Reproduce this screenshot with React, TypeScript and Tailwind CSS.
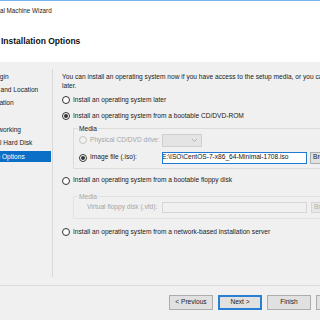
import React from "react";

function Radio({ checked = false, disabled = false }: { checked?: boolean; disabled?: boolean }) {
  return (
    <span
      className={
        "flex h-[8px] w-[8px] shrink-0 items-center justify-center rounded-full border " +
        (disabled ? "border-[#c6c6c6] bg-[#f0f0f0]" : "border-[#333333] bg-white")
      }
    >
      {checked ? <span className="h-[4px] w-[4px] rounded-full bg-[#333333]" /> : null}
    </span>
  );
}

function Btn({ label, primary = false }: { label: string; primary?: boolean }) {
  return (
    <div
      className={
        "flex h-[15px] w-[44px] shrink-0 items-center justify-center border bg-[#e1e1e1] text-[#1a1a1a] " +
        (primary ? "border-[#2a7fd4] shadow-[inset_0_0_0_1px_#2a7fd4]" : "border-[#adadad]")
      }
    >
      {label}
    </div>
  );
}

export default function App() {
  const nav = [
    { t: "Before You Begin", cls: "ml-[-42.4px]" },
    { t: "Specify Name and Location", cls: "ml-[-42.4px]" },
    { t: "Specify Generation", cls: "ml-[-42.4px]" },
    { t: "Assign Memory", cls: "ml-[-46px]" },
    { t: "Configure Networking", cls: "ml-[-42.4px]" },
    { t: "Connect Virtual Hard Disk", cls: "ml-[-43.5px]" },
    { t: "Installation Options", cls: "ml-[-31.4px]", sel: true },
    { t: "Summary", cls: "ml-[-42.4px]" },
  ];
  return (
    <div className="relative flex h-[320px] w-[320px] flex-col overflow-hidden bg-[#f0f0f0] font-['Liberation_Sans',Arial,sans-serif] text-[6.6px] leading-[8.5px] text-[#1a1a1a]">
      <div className="h-px shrink-0 bg-[#78b6e9]" />
      <div className="flex h-[61px] shrink-0 flex-col bg-white">
        <div className="flex h-[19px] items-center whitespace-nowrap pt-[1px] text-[6.3px]">
          <span className="ml-[-27.3px]">New Virtual Machine Wizard</span>
        </div>
        <div className="mt-[15px] flex h-[12px] items-center whitespace-nowrap pl-[1px] text-[8.5px] font-bold text-[#111]">
          Installation Options
        </div>
      </div>
      <div className="flex h-[223px] shrink-0">
        <div className="flex w-[52px] shrink-0 flex-col gap-[2.33px] overflow-hidden pt-[9px]">
          {nav.map((n, i) => (
            <div
              key={i}
              className={
                "flex h-[11px] shrink-0 items-center whitespace-nowrap pt-[1px] " +
                (n.sel ? "w-[51px] bg-[#0b6fc7] text-white" : "")
              }
            >
              <span className={n.cls}>{n.t}</span>
            </div>
          ))}
        </div>
        <div className="mt-[7px] h-[208px] w-px shrink-0 bg-[#d9d9d9]" />
        <div className="flex min-w-0 flex-1 flex-col pl-[9px]">
          <div className="mt-[11px] whitespace-nowrap leading-[8.5px]">
            You can install an operating system now if you have access to the setup media, or you can install it
            <br />
            later.
          </div>
          <div className="mt-[5px] flex h-[10px] items-center gap-[3px] whitespace-nowrap">
            <Radio />
            <span>Install an operating system later</span>
          </div>
          <div className="mt-[6px] flex h-[10px] items-center gap-[3px] whitespace-nowrap">
            <Radio checked />
            <span>Install an operating system from a bootable CD/DVD-ROM</span>
          </div>
          <div className="relative ml-[11px] mt-[6.5px] w-[300px] shrink-0 border border-[#dcdcdc] pb-[4px] pl-[5px]">
            <span className="absolute left-[4px] top-[-4px] bg-[#f0f0f0] px-[1px] leading-[8.5px]">Media</span>
            <div className="mt-[5px] flex h-[13px] items-center whitespace-nowrap">
              <div className="flex w-[83px] items-center gap-[3px] text-[#a6a6a6]">
                <Radio disabled />
                <span>Physical CD/DVD drive:</span>
              </div>
              <div className="flex h-[13px] w-[40px] items-center justify-end border border-[#cfcfcf] bg-[#e4e4e4] pr-[3px]">
                <svg width="7" height="5" viewBox="0 0 7 5">
                  <path d="M1 1 L3.5 3.5 L6 1" fill="none" stroke="#b0b0b0" strokeWidth="0.9" />
                </svg>
              </div>
            </div>
            <div className="mt-[5px] flex h-[12px] items-center whitespace-nowrap">
              <div className="flex w-[83px] items-center gap-[3px]">
                <Radio checked />
                <span>Image file (.iso):</span>
              </div>
              <div className="flex h-[12px] w-[145px] items-center overflow-hidden border border-[#1f7ad6] bg-white pl-[1px] text-[#111]">
                <span className="ml-[-2px]">E:\ISO\CentOS-7-x86_64-Minimal-1708.iso</span>
              </div>
              <div className="ml-[3px] flex h-[12px] w-[40px] items-center border border-[#adadad] bg-[#e1e1e1] pl-[2px]">
                Browse...
              </div>
            </div>
          </div>
          <div className="mt-[7px] flex h-[10px] items-center gap-[3px] whitespace-nowrap">
            <Radio />
            <span>Install an operating system from a bootable floppy disk</span>
          </div>
          <div className="relative ml-[11px] mt-[10px] w-[300px] shrink-0 border border-[#e2e2e2] pb-[5px] pl-[13px]">
            <span className="absolute left-[4px] top-[-4px] bg-[#f0f0f0] px-[1px] leading-[8.5px] text-[#a6a6a6]">Media</span>
            <div className="mt-[5px] flex h-[11px] items-center whitespace-nowrap">
              <div className="w-[75px] pt-[1px] text-[#a6a6a6]">Virtual floppy disk (.vfd):</div>
              <div className="h-[11px] w-[145px] border border-[#d6d6d6] bg-[#f0f0f0]" />
              <div className="ml-[4px] flex h-[11px] w-[40px] items-center border border-[#d6d6d6] bg-[#e8e8e8] pl-[2px] text-[#b0b0b0]">
                Browse...
              </div>
            </div>
          </div>
          <div className="mt-[8px] flex h-[10px] items-center gap-[3px] whitespace-nowrap">
            <Radio />
            <span className="pt-[1px]">Install an operating system from a network-based installation server</span>
          </div>
        </div>
      </div>
      <div className="h-px shrink-0 bg-[#dcdcdc]" />
      <div className="flex gap-[5px] pl-[169px] pt-[9px]">
        <Btn label="< Previous" />
        <Btn label="Next >" primary />
        <Btn label="Finish" />
        <Btn label="Cancel" />
      </div>
    </div>
  );
}
